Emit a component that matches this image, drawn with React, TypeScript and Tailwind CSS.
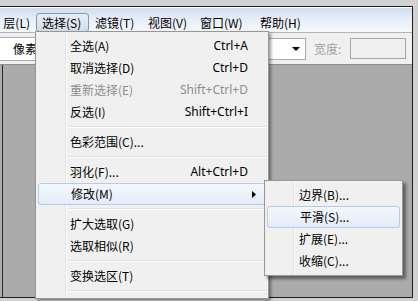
import React from 'react';

type Entry =
  | { kind: 'item'; label: string; shortcut?: string; disabled?: boolean; active?: boolean; sub?: boolean }
  | { kind: 'sep' };

const mainItems: Entry[] = [
  { kind: 'item', label: '全选(A)', shortcut: 'Ctrl+A' },
  { kind: 'item', label: '取消选择(D)', shortcut: 'Ctrl+D' },
  { kind: 'item', label: '重新选择(E)', shortcut: 'Shift+Ctrl+D', disabled: true },
  { kind: 'item', label: '反选(I)', shortcut: 'Shift+Ctrl+I' },
  { kind: 'sep' },
  { kind: 'item', label: '色彩范围(C)...' },
  { kind: 'sep' },
  { kind: 'item', label: '羽化(F)...', shortcut: 'Alt+Ctrl+D' },
  { kind: 'item', label: '修改(M)', active: true, sub: true },
  { kind: 'sep' },
  { kind: 'item', label: '扩大选取(G)' },
  { kind: 'item', label: '选取相似(R)' },
  { kind: 'sep' },
  { kind: 'item', label: '变换选区(T)' },
  { kind: 'sep' },
];

const subItems: Entry[] = [
  { kind: 'item', label: '边界(B)...' },
  { kind: 'item', label: '平滑(S)...', active: true },
  { kind: 'item', label: '扩展(E)...' },
  { kind: 'item', label: '收缩(C)...' },
];

// menu bar entries after the open one, with their slot widths
const menuBar = [
  { label: '滤镜(T)', w: 'w-[53px]' },
  { label: '视图(V)', w: 'w-[52px]' },
  { label: '窗口(W)', w: 'w-[60px]' },
  { label: '帮助(H)', w: 'w-[56px]' },
];

function MenuRows({ entries, gutter }: { entries: Entry[]; gutter: string }) {
  return (
    <>
      {/* gutter line sits behind the rows */}
      <div className={`absolute top-0 bottom-0 ${gutter} flex`}>
        <div className="w-px bg-[#e2e3e3]" />
        <div className="w-px bg-white" />
      </div>
      {entries.map((e, i) =>
        e.kind === 'sep' ? (
          <div key={i} className="relative flex h-[8px] flex-col justify-center pl-[29px]">
            <div className="h-px bg-[#e0e0e0]" />
            <div className="h-px bg-white" />
          </div>
        ) : (
          <div
            key={i}
            className={`relative flex h-[22px] items-center rounded-[3px] pl-[32px] pr-[18px] ${
              e.active
                ? 'border border-[#b4cbe9] bg-linear-to-b from-[#f4f8fd] to-[#e2ecf8] pl-[31px] pr-[17px]'
                : ''
            } ${e.disabled ? 'text-[#8e8e8e]' : 'text-black'}`}
          >
            <span className="flex-1 whitespace-nowrap">{e.label}</span>
            {e.shortcut && (
              <span className="whitespace-nowrap font-['Noto_Sans',sans-serif] text-[12px]">{e.shortcut}</span>
            )}
            {e.sub && (
              <svg className="absolute right-[9px] top-[7px]" width="4" height="7" viewBox="0 0 4 7">
                <path d="M0 0 L4 3.5 L0 7 Z" fill="#000" />
              </svg>
            )}
          </div>
        )
      )}
    </>
  );
}

export default function App() {
  return (
    <div className="relative h-[301px] w-[418px] overflow-hidden bg-[#d2d2d2] pt-[6px] pr-[5px] pb-[3px] font-['Noto_Sans_CJK_SC',sans-serif] text-[12px] leading-none text-black">
      <div className="flex h-full flex-col border-t border-r border-b border-[#1c1c1c]">
        {/* menu bar */}
        <div className="flex h-[25px] items-end border-t border-white bg-linear-to-b from-[#cfdcee] via-[#e9eff8] to-[#f5f8fc]">
          <div className="ml-[-8px] flex h-[19px] w-[44px] items-center justify-end pr-[6px]">层(L)</div>
          <div className="flex h-[19px] w-[53px] items-center rounded-[3px] border border-[#8496b0] bg-linear-to-b from-[#e6edf6] to-[#d3deec] pl-[5px]">
            选择(S)
          </div>
          {menuBar.map((m) => (
            <div key={m.label} className={`flex h-[19px] items-center pl-[6px] ${m.w}`}>
              {m.label}
            </div>
          ))}
        </div>
        {/* tool options bar */}
        <div className="flex h-[33px] items-center border-t border-[#b1b5bb] border-b border-b-[#8f8f8f] bg-[#f0f0f0]">
          <div className="ml-[-2px] flex h-[24px] w-[60px] items-center border border-[#abadb3] bg-white pl-[14px]">像素</div>
          <div className="relative ml-[142px] h-[22px] w-[106px] border border-[#a9adb3] bg-white">
            <svg className="absolute right-[5px] top-[8px]" width="8" height="4" viewBox="0 0 8 4">
              <path d="M0 0 L8 0 L4 4 Z" fill="#000" />
            </svg>
          </div>
          <div className="ml-[8px] text-[#a2a2a2]">宽度:</div>
          <div className="ml-[9px] h-[21px] w-[56px] border border-[#a6a6a6] bg-[#f0f0f0]" />
        </div>
        {/* canvas */}
        <div className="flex-1 bg-[#ababab] pl-[2px]">
          <div className="h-full border-l border-[#2b2b2b]" />
        </div>
      </div>

      {/* 选择 dropdown */}
      <div className="absolute left-[35px] top-[31px] w-[234px] border border-[#979797] bg-[#f0f0f0] px-[2px] py-[3px] shadow-[2px_2px_3px_rgba(0,0,0,0.4)]">
        <MenuRows entries={mainItems} gutter="left-[29px]" />
      </div>

      {/* 修改 submenu */}
      <div className="absolute left-[264px] top-[180px] w-[139px] border border-[#979797] bg-[#f0f0f0] px-[2px] py-[3px] shadow-[3px_3px_3px_rgba(0,0,0,0.45)]">
        <MenuRows entries={subItems} gutter="left-[28px]" />
      </div>
    </div>
  );
}
